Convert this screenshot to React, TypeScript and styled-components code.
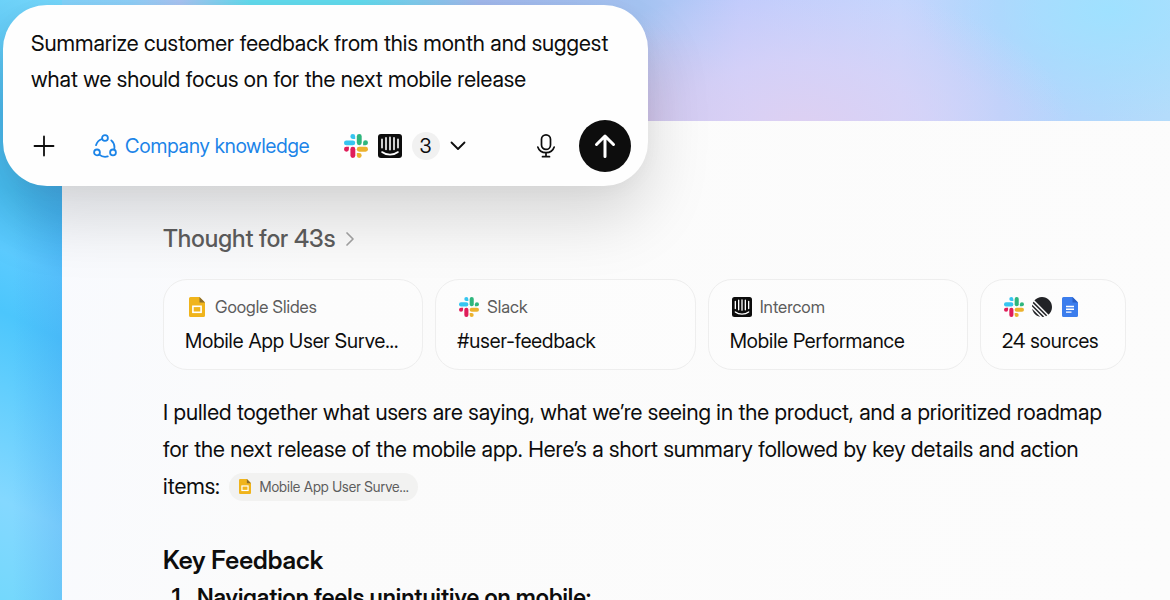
import React from 'react';
import styled, { createGlobalStyle } from 'styled-components';

const GlobalStyle = createGlobalStyle`
  *, *::before, *::after { box-sizing: border-box; }
  body { margin: 0; font-family: "Inter Display", Inter, "Liberation Sans", sans-serif; color: #0d0d0d; }
  button, textarea { font: inherit; color: inherit; }
  button { border: 0; padding: 0; background: none; cursor: pointer; }
  h2, p, ol { margin: 0; padding: 0; }
`;

const Desktop = styled.div`
  position: relative;
  height: 100vh;
  overflow: hidden;
  display: flex;
  flex-direction: column;
  padding: 121px 0 0 62px;
  background:
    linear-gradient(90deg, transparent 20%, rgba(58, 140, 232, 0.22) 100%) 0 180px / 62px 100% no-repeat,
    linear-gradient(205deg, #76d8fc 0, #4ebdf0 22%, #47bdf1 34%, #5ccbff 44%, #4cc6fc 54%, #62cefd 66%, #84d8ff 84%, #74d8fc 100%) 0 0 / 62px 100% no-repeat,
    radial-gradient(ellipse 270px 140px at 800px 125px, #ddd0f2 0, rgba(220, 210, 246, 0.7) 45%, rgba(214, 212, 250, 0) 100%),
    radial-gradient(ellipse 110px 100px at 640px 125px, rgba(205, 182, 220, 0.9) 0, rgba(205, 182, 220, 0) 100%),
    radial-gradient(ellipse 190px 110px at 1110px 10px, #9fe1ff 0, rgba(159, 225, 255, 0) 100%),
    linear-gradient(90deg, #7ad6fc 0, #8fd0f8 130px, #a9c4f2 180px, #62dcee 250px, #62dcee 360px, #a2b8ec 480px, #a5c4f2 640px, #bfcbfc 740px, #c5d6fd 900px, #b7d2fc 1000px, #b2d8fc 1100px, #b4dcfb 100%);
`;

const Panel = styled.main`
  flex: 1 0 auto;
  padding: 100px 44px 0 101px;
  background: linear-gradient(100deg, #f8fafe 0, #fbfbfb 24%, #fcfcfc 100%);
`;

const Prompt = styled.form`
  position: absolute;
  z-index: 1;
  top: 5px;
  left: 3px;
  width: 645px;
  max-width: calc(100% - 6px);
  padding: 20px 17px 14px 28px;
  border-radius: 44px;
  background: #fefefe;
  box-shadow: 0 32px 64px rgba(0, 0, 0, 0.15), 0 4px 20px rgba(0, 0, 0, 0.03);
`;

const PromptInput = styled.textarea`
  display: block;
  width: 100%;
  height: 72px;
  padding: 0;
  border: 0;
  outline: 0;
  resize: none;
  overflow: hidden;
  background: none;
  font-size: 22px;
  line-height: 36px;
`;

const Toolbar = styled.div`
  display: flex;
  align-items: center;
  margin-top: 23px;
`;

const IconButton = styled.button`
  display: grid;
  place-items: center;
  width: 26px;
  height: 26px;
`;

const KnowledgeButton = styled.button`
  display: flex;
  align-items: center;
  gap: 8px;
  margin-left: 36px;
  font-size: 20px;
  line-height: 28px;
  color: #1b84e8;
`;

const SourcesButton = styled.button`
  display: flex;
  align-items: center;
  gap: 10px;
  margin-left: 34px;
`;

const Count = styled.span`
  display: grid;
  place-items: center;
  width: 28px;
  height: 28px;
  border-radius: 50%;
  background: #f1f1f1;
  font-size: 20px;
`;

const Actions = styled.div`
  display: flex;
  align-items: center;
  gap: 20px;
  margin-left: auto;
`;

const SendButton = styled.button`
  display: grid;
  place-items: center;
  width: 52px;
  height: 52px;
  border-radius: 50%;
  background: #0d0d0d;
  color: #fff;
`;

const Thought = styled.button`
  display: flex;
  align-items: center;
  gap: 10px;
  font-size: 24px;
  font-weight: 500;
  line-height: 36px;
  color: #5d5d5d;
`;

const Cards = styled.div`
  display: grid;
  grid-template-columns: repeat(3, minmax(0, 1fr)) 146px;
  gap: 12px;
  margin-top: 22px;
`;

const Card = styled.a`
  display: flex;
  flex-direction: column;
  gap: 8px;
  min-width: 0;
  padding: 14px 21px 15px;
  border: 1px solid #eeeeee;
  border-radius: 24px;
  background: rgba(255, 255, 255, 0.35);
  color: inherit;
  text-decoration: none;
`;

const CardSource = styled.span`
  display: flex;
  align-items: center;
  gap: 8px;
  height: 26px;
  padding-left: 2px;
  font-size: 17px;
  color: #5d5d5d;
`;

const IconSlot = styled.span`
  display: grid;
  place-items: center;
  width: 20px;
  height: 20px;
`;

const CardTitle = styled.span`
  font-size: 20px;
  line-height: 26px;
  white-space: nowrap;
`;

const Answer = styled.p`
  margin-top: 24px;
  font-size: 22px;
  line-height: 37px;
`;

const Citation = styled.a`
  display: inline-flex;
  align-items: center;
  gap: 8px;
  height: 28px;
  margin-left: 4px;
  padding: 0 9px 0 10px;
  border-radius: 14px;
  background: #f2f2f1;
  font-size: 14px;
  line-height: 28px;
  color: #5d5d5d;
  text-decoration: none;
`;

const Heading = styled.h2`
  margin-top: 36px;
  font-size: 25px;
  font-weight: 600;
  line-height: 38px;
`;

const Findings = styled.ol`
  padding-left: 34px;
  font-size: 23px;
  font-weight: 600;
  line-height: 37px;
`;

const SlackLogo = ({ size }: { size: number }) => (
  <svg width={size} height={size} viewBox="0 0 24 24" aria-hidden="true">
    <g fill="#36C5F0">
      <path d="M8.8 0a2.4 2.4 0 1 0 0 4.9h2.4V2.4A2.4 2.4 0 0 0 8.8 0z" />
      <rect y="6.4" width="11.2" height="4.9" rx="2.4" />
    </g>
    <g fill="#2EB67D">
      <path d="M24 8.8a2.4 2.4 0 1 0-4.9 0v2.4h2.5A2.4 2.4 0 0 0 24 8.8z" />
      <rect x="12.8" width="4.9" height="11.2" rx="2.4" />
    </g>
    <g fill="#ECB22E">
      <path d="M15.2 24a2.4 2.4 0 1 0 0-4.9h-2.4v2.5a2.4 2.4 0 0 0 2.4 2.4z" />
      <rect x="12.8" y="12.8" width="11.2" height="4.9" rx="2.4" />
    </g>
    <g fill="#E01E5A">
      <path d="M0 15.2a2.4 2.4 0 1 0 4.9 0v-2.4H2.4A2.4 2.4 0 0 0 0 15.2z" />
      <rect x="6.4" y="12.8" width="4.9" height="11.2" rx="2.4" />
    </g>
  </svg>
);

const IntercomLogo = ({ size }: { size: number }) => (
  <svg width={size} height={size} viewBox="0 0 24 24" aria-hidden="true">
    <rect width="24" height="24" rx="3" fill="#0d0d0d" />
    <g fill="none" stroke="#fff" strokeWidth="1.6" strokeLinecap="round">
      <path d="M4 5.2v8.6M8 3.8v11.6M12 3.4v12.4M16 3.8v11.6M20 5.2v8.6" />
      <path d="M4 18c4.4 3.5 11.6 3.5 16 0" />
    </g>
  </svg>
);

const SlidesLogo = ({ height }: { height: number }) => (
  <svg width={Math.round(height * 0.8)} height={height} viewBox="0 0 16 20" aria-hidden="true">
    <path d="M1.5 0H10.5L16 5.5V18.5A1.5 1.5 0 0 1 14.5 20H1.5A1.5 1.5 0 0 1 0 18.5V1.5A1.5 1.5 0 0 1 1.5 0z" fill="#F0B41C" />
    <path d="M10.5 0L16 5.5H10.5z" fill="#8A6D2B" />
    <rect x="3.9" y="9.3" width="8.2" height="6" fill="none" stroke="#fff" strokeWidth="1.6" />
  </svg>
);

const DocsLogo = () => (
  <svg width="16" height="20" viewBox="0 0 16 20" aria-hidden="true">
    <path d="M1.5 0H10.5L16 5.5V18.5A1.5 1.5 0 0 1 14.5 20H1.5A1.5 1.5 0 0 1 0 18.5V1.5A1.5 1.5 0 0 1 1.5 0z" fill="#3B7DED" />
    <path d="M10.5 0L16 5.5H10.5z" fill="#2A5FC4" />
    <path d="M4 9.5h8M4 12.3h8M4 15.1h5.5" stroke="#fff" strokeWidth="1.4" />
  </svg>
);

const LinearLogo = () => (
  <svg width="20" height="20" viewBox="0 0 100 100" fill="#222326" aria-hidden="true">
    <path d="M1.225 61.523c-.222-.949.908-1.546 1.597-.857l36.512 36.512c.69.690.092 1.820-.857 1.597-18.425-4.323-32.930-18.827-37.252-37.252zM.002 46.889a.990.990 0 0 0 .290.760l52.060 52.060c.200.200.477.306.760.289a50 50 0 0 0 6.963-.918c.764-.157 1.030-1.096.478-1.648L2.567 39.448c-.552-.552-1.491-.286-1.648.478a50 50 0 0 0-.917 6.963zM4.211 29.705a.988.988 0 0 0 .208 1.103l64.776 64.776c.290.290.726.374 1.103.208a50 50 0 0 0 5.185-2.684.987.987 0 0 0 .183-1.540L8.436 24.336a.987.987 0 0 0-1.541.183 50 50 0 0 0-2.684 5.185zM12.659 18.074a.986.986 0 0 1-.045-1.354C21.780 6.460 35.111 0 49.952 0 77.592 0 100 22.407 100 50.048c0 14.840-6.460 28.172-16.720 37.338a.986.986 0 0 1-1.354-.045z" />
  </svg>
);

const KnowledgeIcon = () => (
  <svg width="24" height="24" viewBox="0 0 24 24" fill="none" stroke="currentColor" strokeWidth="1.8" strokeLinecap="round" aria-hidden="true">
    <circle cx="12" cy="4" r="2.9" />
    <circle cx="4" cy="18.4" r="2.9" />
    <circle cx="20" cy="18.4" r="2.9" />
    <path d="M3 11.2A9.4 9.4 0 0 1 9 5M18.3 6.4A9.4 9.4 0 0 1 21.2 15.4M6.2 20.6A9.6 9.6 0 0 0 14.8 22.4" />
  </svg>
);

const PlusIcon = () => (
  <svg width="22" height="22" viewBox="0 0 22 22" stroke="currentColor" strokeWidth="1.8" strokeLinecap="round" aria-hidden="true">
    <path d="M11 1.5v19M1.5 11h19" />
  </svg>
);

const ChevronDown = () => (
  <svg width="16" height="10" viewBox="0 0 16 10" fill="none" stroke="currentColor" strokeWidth="1.8" strokeLinecap="round" strokeLinejoin="round" aria-hidden="true">
    <path d="M1.5 1.5L8 8l6.5-6.5" />
  </svg>
);

const ChevronRight = () => (
  <svg width="10" height="16" viewBox="0 0 10 16" fill="none" stroke="#a3a3a3" strokeWidth="1.7" strokeLinecap="round" strokeLinejoin="round" aria-hidden="true">
    <path d="M2 2l6 6-6 6" />
  </svg>
);

const MicIcon = () => (
  <svg width="20" height="26" viewBox="0 0 20 26" fill="none" stroke="currentColor" strokeWidth="1.7" strokeLinecap="round" aria-hidden="true">
    <rect x="5.5" y="1.8" width="9" height="14.6" rx="4.5" />
    <path d="M1.8 14c1.2 3.6 4.4 5.7 8.2 5.7s7-2.1 8.2-5.7M10 19.7v3.8M6.5 23.7h7" />
  </svg>
);

const ArrowUp = () => (
  <svg width="22" height="26" viewBox="0 0 22 26" fill="none" stroke="currentColor" strokeWidth="3" strokeLinecap="round" strokeLinejoin="round" aria-hidden="true">
    <path d="M11 23.5V3M2.5 11.5L11 3l8.5 8.5" />
  </svg>
);

const cards = [
  { source: 'Google Slides', title: 'Mobile App User Surve...', icon: <SlidesLogo height={20} /> },
  { source: 'Slack', title: '#user-feedback', icon: <SlackLogo size={20} /> },
  { source: 'Intercom', title: 'Mobile Performance', icon: <IntercomLogo size={20} /> },
];

export default function App() {
  return (
    <>
      <GlobalStyle />
      <Desktop>
        <Prompt onSubmit={(e) => e.preventDefault()}>
          <PromptInput
            aria-label="Message"
            spellCheck={false}
            defaultValue="Summarize customer feedback from this month and suggest what we should focus on for the next mobile release"
          />
          <Toolbar>
            <IconButton type="button" aria-label="Add"><PlusIcon /></IconButton>
            <KnowledgeButton type="button"><KnowledgeIcon />Company knowledge</KnowledgeButton>
            <SourcesButton type="button" aria-label="Connected sources">
              <SlackLogo size={24} />
              <IntercomLogo size={24} />
              <Count>3</Count>
              <ChevronDown />
            </SourcesButton>
            <Actions>
              <IconButton type="button" aria-label="Dictate"><MicIcon /></IconButton>
              <SendButton type="submit" aria-label="Send"><ArrowUp /></SendButton>
            </Actions>
          </Toolbar>
        </Prompt>
        <Panel>
          <Thought type="button">Thought for 43s<ChevronRight /></Thought>
          <Cards>
            {cards.map((card) => (
              <Card href="#" key={card.source}>
                <CardSource><IconSlot>{card.icon}</IconSlot>{card.source}</CardSource>
                <CardTitle>{card.title}</CardTitle>
              </Card>
            ))}
            <Card href="#">
              <CardSource>
                <IconSlot><SlackLogo size={20} /></IconSlot>
                <IconSlot><LinearLogo /></IconSlot>
                <IconSlot><DocsLogo /></IconSlot>
              </CardSource>
              <CardTitle>24 sources</CardTitle>
            </Card>
          </Cards>
          <Answer>
            I pulled together what users are saying, what we’re seeing in the product, and a prioritized roadmap for the next release of the mobile app. Here’s a short summary followed by key details and action items:{' '}
            <Citation href="#"><SlidesLogo height={15} />Mobile App User Surve...</Citation>
          </Answer>
          <Heading>Key Feedback</Heading>
          <Findings>
            <li>Navigation feels unintuitive on mobile:</li>
          </Findings>
        </Panel>
      </Desktop>
    </>
  );
}
